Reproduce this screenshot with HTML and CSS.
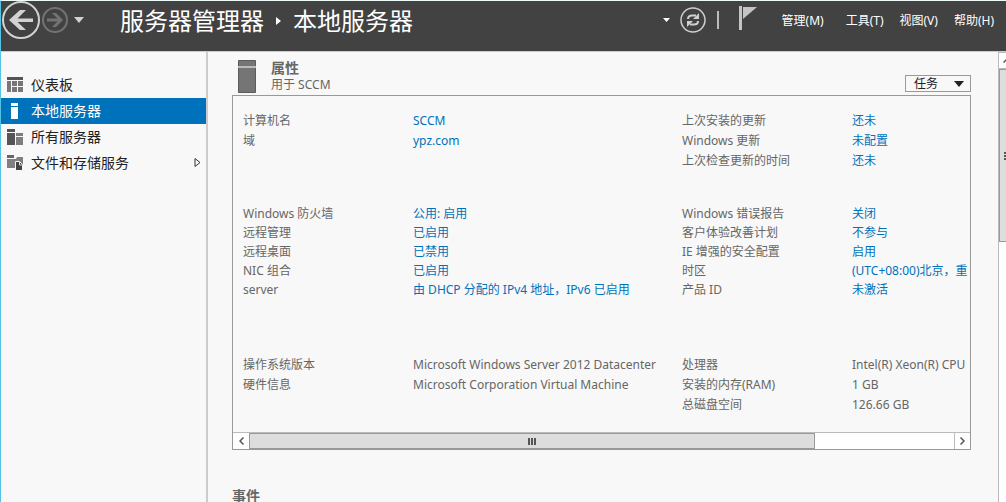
FILE: index.html
```html
<!DOCTYPE html>
<html lang="zh-CN">
<head>
<meta charset="utf-8">
<title>服务器管理器</title>
<link rel="stylesheet" href="styles.css">
</head>
<body>
<div class="window">
  <header class="topbar">
    <button class="icon-btn back" aria-label="后退">
      <svg width="40" height="40" viewBox="0 0 40 40"><circle cx="20" cy="20" r="18" fill="none" stroke="#d2d2d2" stroke-width="2"/><path d="M8 20l11-10h6l-8.500 8.500H32v3.500H16.500L25 30h-6z" fill="#d2d2d2"/></svg>
    </button>
    <button class="icon-btn forward" aria-label="前进">
      <svg width="26" height="26" viewBox="0 0 26 26"><circle cx="13" cy="13" r="12" fill="none" stroke="#737373" stroke-width="2"/><path d="M21 13l-7-7h-4l5.500 5.500H5v3h10.500L10 20h4z" fill="#737373"/></svg>
    </button>
    <button class="icon-btn history" aria-label="历史记录">
      <svg width="10" height="6" viewBox="0 0 10 6"><path d="M0 0h10L5 6z" fill="#d2d2d2"/></svg>
    </button>
    <h1 class="crumbs"><span>服务器管理器</span><svg width="5" height="8" viewBox="0 0 5 8"><path d="M0 0l5 4-5 4z" fill="#fff"/></svg><span>本地服务器</span></h1>
    <div class="tools">
      <button class="icon-btn" aria-label="更多">
        <svg width="7" height="4" viewBox="0 0 7 4"><path d="M0 0h7L3.500 4z" fill="#fff"/></svg>
      </button>
      <button class="icon-btn refresh" aria-label="刷新">
        <svg width="26" height="26" viewBox="0 0 26 26" fill="none" stroke="#cfcfcf"><circle cx="13" cy="13" r="12" stroke-width="1.500"/><path d="M8 12q0-3.500 4-3.500h4" stroke-width="2"/><path d="M18 14q0 3.500-4 3.500h-4" stroke-width="2"/><path d="M19 6v6h-6zM7 20v-6h6z" fill="#cfcfcf" stroke="none"/></svg>
      </button>
      <span class="divider"></span>
      <button class="icon-btn flag" aria-label="通知">
        <svg width="18" height="24" viewBox="0 0 18 24"><path d="M0 0h3v24H0z" fill="#c4c4c4"/><path d="M4 1h14L4 13z" fill="#c4c4c4"/></svg>
      </button>
    </div>
    <nav class="menu">
      <button>管理(M)</button>
      <button>工具(T)</button>
      <button>视图(V)</button>
      <button>帮助(H)</button>
    </nav>
  </header>

  <div class="body">
    <nav class="sidebar">
      <a href="#dashboard"><svg width="16" height="15" viewBox="0 0 16 15"><path d="M0 0h16v3H0z" fill="#555"/><path d="M0 4h4v11H0zM5 4h5v5H5zM11 4h5v5h-5zM5 10h5v5H5zM11 10h5v5h-5z" fill="#777"/></svg><span>仪表板</span></a>
      <a href="#local" class="selected"><svg width="16" height="16" viewBox="0 0 16 16"><path d="M4 0h7v3H4zM4 4h7v12H4z" fill="#fff"/></svg><span>本地服务器</span></a>
      <a href="#all"><svg width="16" height="16" viewBox="0 0 16 16"><path d="M0 0h8v3H0zM0 4h8v12H0z" fill="#555"/><path d="M9 4h7v3H9zM9 8h7v8H9z" fill="#7d7d7d"/></svg><span>所有服务器</span></a>
      <a href="#files"><svg width="16" height="16" viewBox="0 0 16 16"><path d="M0 0h7v3H0z" fill="#666"/><path d="M0 4h9l1-2h6v11H0z" fill="#808080"/><path d="M8.500 6.500h4l3 3v6h-7z" fill="#444" stroke="#f8f8f8"/><path d="M12.500 7v3H16" fill="none" stroke="#ddd"/></svg><span>文件和存储服务</span><svg class="expand" width="7" height="9" viewBox="0 0 7 9"><path d="M1 .500l5 4-5 4z" fill="none" stroke="#333"/></svg></a>
    </nav>

    <main class="content">
      <div class="section-head">
        <svg width="18" height="33" viewBox="0 0 18 33"><path d="M.500.500h17v32H.500z" fill="#757575" stroke="#5c5c5c"/><path d="M0 6h18v2H0z" fill="#bbb"/></svg>
        <div class="heading">
          <h2>属性</h2>
          <p>用于 SCCM</p>
        </div>
        <button class="tasks">任务<svg width="10" height="6" viewBox="0 0 10 6"><path d="M0 0h10L5 6z" fill="#222"/></svg></button>
      </div>

      <section class="panel" aria-label="属性">
        <div class="viewport">
          <div class="group short">
            <dl>
              <dt>计算机名</dt><dd><a href="#name">SCCM</a></dd>
              <dt>域</dt><dd><a href="#domain">ypz.com</a></dd>
            </dl>
            <dl>
              <dt>上次安装的更新</dt><dd><a href="#installed">还未</a></dd>
              <dt>Windows 更新</dt><dd><a href="#update">未配置</a></dd>
              <dt>上次检查更新的时间</dt><dd><a href="#checked">还未</a></dd>
            </dl>
          </div>
          <div class="group tall">
            <dl>
              <dt>Windows 防火墙</dt><dd><a href="#firewall">公用: 启用</a></dd>
              <dt>远程管理</dt><dd><a href="#remote">已启用</a></dd>
              <dt>远程桌面</dt><dd><a href="#desktop">已禁用</a></dd>
              <dt>NIC 组合</dt><dd><a href="#nic">已启用</a></dd>
              <dt>server</dt><dd><a href="#server">由 DHCP 分配的 IPv4 地址，IPv6 已启用</a></dd>
            </dl>
            <dl>
              <dt>Windows 错误报告</dt><dd><a href="#report">关闭</a></dd>
              <dt>客户体验改善计划</dt><dd><a href="#ceip">不参与</a></dd>
              <dt>IE 增强的安全配置</dt><dd><a href="#ie">启用</a></dd>
              <dt>时区</dt><dd><a href="#zone">(UTC+08:00)北京，重</a></dd>
              <dt>产品 ID</dt><dd><a href="#product">未激活</a></dd>
            </dl>
          </div>
          <div class="group short">
            <dl>
              <dt>操作系统版本</dt><dd>Microsoft Windows Server 2012 Datacenter</dd>
              <dt>硬件信息</dt><dd>Microsoft Corporation Virtual Machine</dd>
            </dl>
            <dl>
              <dt>处理器</dt><dd>Intel(R) Xeon(R) CPU</dd>
              <dt>安装的内存(RAM)</dt><dd>1 GB</dd>
              <dt>总磁盘空间</dt><dd>126.66 GB</dd>
            </dl>
          </div>
        </div>
        <div class="hscroll">
          <button aria-label="向左滚动"><svg width="5" height="8" viewBox="0 0 5 8"><path d="M4.500.500L1 4l3.500 3.500" fill="none" stroke="#555" stroke-width="1.500"/></svg></button>
          <div class="track"><div class="thumb"><i></i><i></i><i></i></div></div>
          <button aria-label="向右滚动"><svg width="5" height="8" viewBox="0 0 5 8"><path d="M.500.500L4 4 .500 7.500" fill="none" stroke="#555" stroke-width="1.500"/></svg></button>
        </div>
      </section>

      <h2 class="events">事件</h2>
    </main>

    <div class="vscroll">
      <button aria-label="向上滚动"><svg width="8" height="5" viewBox="0 0 8 5"><path d="M.500 4.500L4 1l3.500 3.500" fill="none" stroke="#555" stroke-width="1.500"/></svg></button>
      <div class="vthumb"><i></i><i></i><i></i></div>
    </div>
  </div>
</div>
</body>
</html>
```
FILE: styles.css
```css
* {
  box-sizing: border-box;
}

body {
  margin: 0;
  background: #f8f8f8;
  color: #666;
  font: 12px/19px "Noto Sans", "Noto Sans CJK SC", sans-serif;
}

h1, h2, p, dl, dd {
  margin: 0;
}

button {
  margin: 0;
  padding: 0;
  border: 0;
  background: none;
  color: inherit;
  font: inherit;
}

svg {
  display: block;
  flex: none;
}

a {
  color: #0072bc;
  text-decoration: none;
}

.window {
  display: flex;
  flex-direction: column;
  height: 100vh;
  overflow: hidden;
  border-top: 1px solid #eefaf8;
  border-left: 1px solid #55c3e6;
}

.topbar {
  display: flex;
  flex: none;
  align-items: center;
  height: 51px;
  padding: 0 12px 12px 0;
  border-bottom: 1px solid #ccc;
  background: #424242;
  color: #fff;
}

.forward {
  margin-left: 1px;
}

.history {
  margin-left: 6px;
}

.crumbs {
  display: flex;
  align-items: center;
  gap: 12px;
  margin-left: 36px;
  padding-top: 2px;
  font-size: 24px;
  font-weight: 400;
  line-height: 36px;
  white-space: nowrap;
}

.tools {
  display: flex;
  align-items: center;
  margin-left: auto;
}

.refresh {
  margin-left: 10px;
}

.divider {
  width: 2px;
  height: 18px;
  margin: 0 20px 0 11px;
  background: #bbb;
}

.flag {
  margin-bottom: 4px;
}

.menu {
  display: flex;
  gap: 16px;
  margin-left: 25px;
  white-space: nowrap;
}

.menu button:first-child {
  margin-right: 6px;
}

.body {
  display: flex;
  flex: 1;
  min-height: 0;
}

.sidebar {
  flex: none;
  width: 207px;
  padding-top: 20px;
  border-right: 2px solid #ccc;
}

.sidebar a {
  display: flex;
  align-items: center;
  gap: 8px;
  height: 26px;
  padding: 0 5px 1px 6px;
  color: #222;
  font-size: 14px;
}

.sidebar .selected {
  background: #0072bc;
  color: #fff;
}

.expand {
  margin-left: auto;
}

.content {
  flex: 1;
  min-width: 0;
  padding: 8px 27px 0 24px;
}

.section-head {
  display: flex;
  align-items: flex-start;
  height: 35px;
  padding-left: 6px;
}

.heading {
  margin-left: 15px;
}

h2 {
  font-size: 14px;
  font-weight: 700;
  line-height: 16px;
}

.heading p {
  line-height: 17px;
}

.tasks {
  display: flex;
  align-items: center;
  justify-content: space-between;
  width: 66px;
  height: 17px;
  margin: 15px 0 0 auto;
  padding: 0 6px 0 8px;
  border: 1px solid #999;
  color: #222;
}

.panel {
  border: 1px solid #999;
}

.viewport {
  padding: 15px 0 18px 10px;
  overflow: hidden;
}

.group {
  display: grid;
  grid-template-columns: 439px 1fr;
  align-items: start;
}

.group dl {
  display: grid;
  grid-template-columns: 170px 1fr;
  white-space: nowrap;
}

.group dd {
  min-width: 0;
}

.short dl {
  row-gap: 1px;
}

.group + .group {
  margin-top: 34px;
}

.tall + .group {
  margin-top: 56px;
}

.hscroll {
  display: flex;
  height: 17px;
  border-top: 1px solid #bbb;
  background: #fff;
}

.hscroll button {
  display: grid;
  place-items: center;
  width: 16px;
}

.hscroll button:last-child {
  border-left: 1px solid #bbb;
}

.track {
  flex: 1;
}

.thumb {
  display: flex;
  align-items: center;
  justify-content: center;
  gap: 1px;
  width: 80.3%;
  height: 100%;
  border: 1px solid #999;
  background: #ddd;
}

.thumb i {
  width: 2px;
  height: 7px;
  background: #555;
}

.events {
  margin-top: 38px;
}

.vscroll {
  flex: none;
  width: 8px;
  overflow: hidden;
  border-left: 1px solid #bbb;
  background: #fff;
}

.vscroll button {
  display: grid;
  place-items: center;
  width: 16px;
  height: 17px;
  border: 1px solid #bbb;
  border-left: 0;
}

.vthumb {
  display: flex;
  flex-direction: column;
  align-items: flex-start;
  justify-content: center;
  gap: 1px;
  width: 16px;
  height: 173px;
  padding-left: 4px;
  border: 1px solid #999;
  background: #ddd;
}

.vthumb i {
  width: 7px;
  height: 2px;
  background: #555;
}
```
